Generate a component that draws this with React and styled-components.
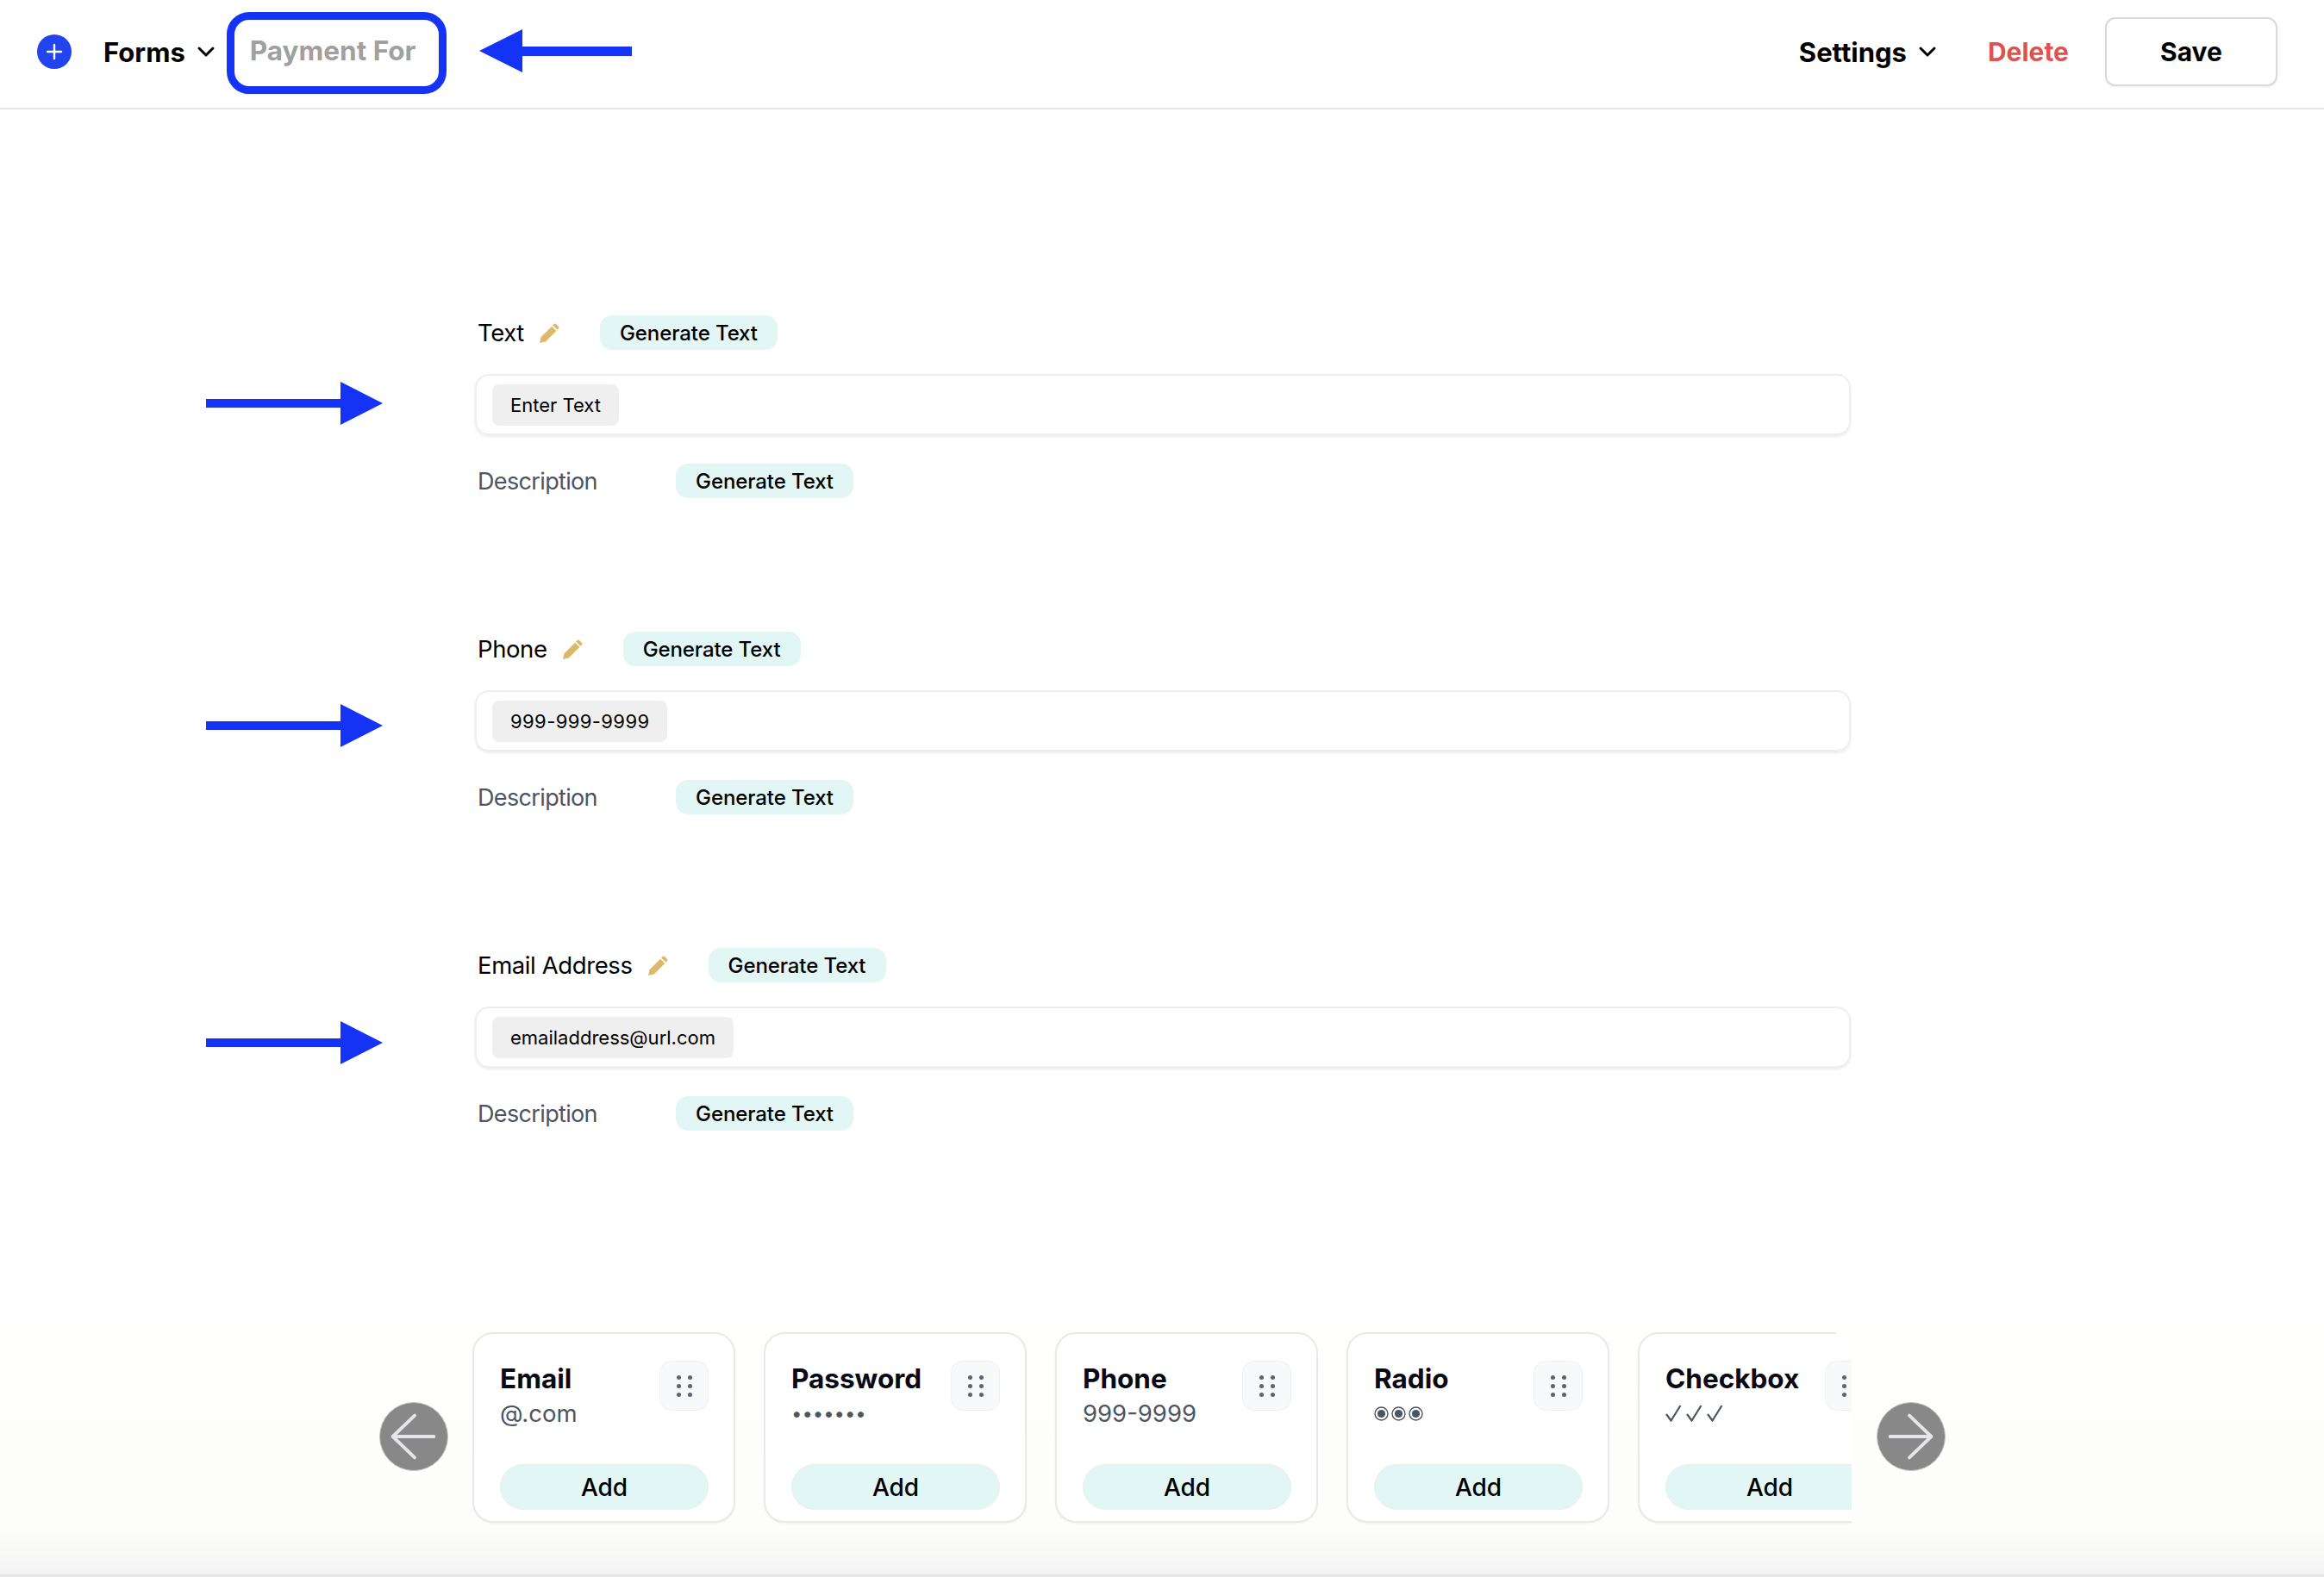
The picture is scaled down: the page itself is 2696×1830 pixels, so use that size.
import React from "react";
import styled, { createGlobalStyle } from "styled-components";
import { ChevronDown } from "lucide-react";

const GlobalStyle = createGlobalStyle`
  html, body { margin: 0; padding: 0; background: #fff; }
  body { font-family: Inter, "Noto Sans", sans-serif; color: #000; }
`;

const FIELDS = [
  { label: "Text", chip: "Enter Text", arrowNudge: -8 },
  { label: "Phone", chip: "999-999-9999", arrowNudge: 6, tracking: 0.4 },
  { label: "Email Address", chip: "emailaddress@url.com", arrowNudge: 8 },
];

const Page = styled.div`
  width: 2696px;
  height: 1830px;
  display: flex;
  flex-direction: column;
  overflow: hidden;
`;

const Header = styled.header`
  height: 127px;
  box-sizing: border-box;
  border-bottom: 2px solid #e6e6e6;
  display: flex;
  align-items: center;
  padding: 0 54px 5px 43px;
`;

const AddRound = styled.span`
  width: 40px;
  height: 40px;
  border-radius: 50%;
  background: #2244ee;
  display: flex;
  align-items: center;
  justify-content: center;
  margin-right: 37px;
`;

const MenuLabel = styled.span`
  font-size: 31px;
  font-weight: 700;
  display: flex;
  align-items: center;
  gap: 8px;
`;

const NameBox = styled.div`
  width: 255px;
  height: 95px;
  box-sizing: border-box;
  border: 9px solid #1433f5;
  border-radius: 26px;
  margin: 3px 0 0 8px;
  padding: 0 0 6px 18px;
  display: flex;
  align-items: center;
  font-size: 31.5px;
  font-weight: 700;
  color: #a0a0a0;
`;

const PointerLeft = styled.svg`
  margin: 0 0 3px 38px;
  display: block;
`;

const Spacer = styled.div`
  flex: 1;
`;

const DeleteLink = styled.span`
  font-size: 30px;
  font-weight: 700;
  color: #e0524d;
  margin-left: 54px;
`;

const SaveButton = styled.button`
  width: 200px;
  height: 80px;
  margin-left: 42px;
  border: 2px solid #dadada;
  border-radius: 12px;
  background: #fff;
  box-shadow: 0 1px 3px rgba(0, 0, 0, 0.08);
  font: 700 30px Inter, sans-serif;
  color: #000;
`;

const Fields = styled.main`
  padding: 239px 0 0 239px;
  display: flex;
  flex-direction: column;
  gap: 155px;
`;

const FieldRow = styled.section`
  display: flex;
  align-items: center;
  gap: 107px;
`;

const Pointer = styled.svg`
  flex: none;
  display: block;
  margin-top: ${(p) => p.$nudge}px;
`;

const FieldBody = styled.div`
  width: 1596px;
`;

const LabelRow = styled.div`
  height: 40px;
  padding-left: 3px;
  display: flex;
  align-items: center;
`;

const FieldLabel = styled.span`
  font-size: ${(p) => (p.$muted ? "27px" : "27.5px")};
  color: ${(p) => (p.$muted ? "#4b5563" : "#000")};
  width: ${(p) => (p.$muted ? "230px" : "auto")};
  letter-spacing: ${(p) => (p.$muted ? "-0.65px" : "-0.4px")};
`;

const Pencil = styled.svg`
  margin: 0 47px 0 18px;
  flex: none;
`;

const GeneratePill = styled.button`
  height: 40px;
  width: 206px;
  border: 0;
  border-radius: 14px;
  background: #e2f6f5;
  font: 500 24px Inter, sans-serif;
  letter-spacing: -0.1px;
  color: #000;
  padding: 0;
`;

const InputBox = styled.div`
  height: 71px;
  box-sizing: border-box;
  margin: 28px 0 33px;
  padding: 0 18px;
  border: 2px solid #eeeeee;
  border-radius: 16px;
  box-shadow: 0 2px 3px rgba(0, 0, 0, 0.08);
  display: flex;
  align-items: center;
`;

const Chip = styled.span`
  height: 48px;
  padding: 0 21px;
  border-radius: 8px;
  background: #efefef;
  font-size: 22px;
  letter-spacing: ${(p) => p.$tracking || 0}px;
  display: flex;
  align-items: center;
`;

const Footer = styled.footer`
  margin-top: auto;
  height: 310px;
  box-sizing: border-box;
  padding: 26px 0 0 440px;
  display: flex;
  align-items: flex-start;
  background: linear-gradient(#fff 0%, #fefefc 10%, #fdfdfb 83%, #f3f3f3 98.8%, #e6e6e6 99.2%);
`;

const RoundNav = styled.button`
  flex: none;
  width: 80px;
  height: 80px;
  margin-top: 81px;
  padding: 0;
  border: 1px solid #c4c4c4;
  border-radius: 50%;
  background: #888;
  display: flex;
  align-items: center;
  justify-content: center;
`;

const Viewport = styled.div`
  position: relative;
  width: 1600px;
  margin: 0 29px 0 28px;
  height: 226px;
  display: flex;
  gap: 33px;
  overflow: hidden;

  &::after {
    content: "";
    position: absolute;
    top: 0;
    right: 0;
    width: 18px;
    height: 3px;
    background: #fff;
  }
`;

const Card = styled.article`
  flex: none;
  width: 305px;
  height: 221px;
  box-sizing: border-box;
  padding: 33px 29px 13px 30px;
  background: #fff;
  border: 2px solid #e9e9e9;
  border-radius: 24px;
  box-shadow: 0 1px 2px rgba(0, 0, 0, 0.05);
  display: flex;
  flex-direction: column;
`;

const CardTop = styled.div`
  display: flex;
  justify-content: space-between;
  height: 118px;
`;

const CardTitle = styled.div`
  font-size: 31.5px;
  line-height: 38px;
  font-weight: 700;
  color: #0a0a14;
`;

const CardSample = styled.div`
  font-size: ${(p) => p.$size || 27.5}px;
  line-height: 36px;
  height: 36px;
  margin-top: 3px;
  color: #4b5563;
  display: flex;
  align-items: center;
  gap: ${(p) => p.$gap || 0}px;
`;

const DragHandle = styled.span`
  flex: none;
  width: 57px;
  height: 58px;
  margin-top: -2px;
  box-sizing: border-box;
  border: 1px solid #eef0f2;
  border-radius: 14px;
  background: #f8f9fb;
  display: grid;
  grid-template-columns: 5px 5px;
  grid-auto-rows: 5px;
  gap: 5px 8px;
  justify-content: center;
  align-content: center;
`;

const HandleDot = styled.i`
  border-radius: 50%;
  background: #5b6470;
`;

const AddButton = styled.button`
  height: 53px;
  flex: none;
  border: 1px solid #e6f1f0;
  border-radius: 27px;
  background: #e2f6f5;
  font: 500 28px Inter, sans-serif;
  color: #000;
  padding: 0;
`;

function RightPointer({ nudge }) {
  return (
    <Pointer $nudge={nudge} width="205" height="50" viewBox="0 0 205 50">
      <path d="M0 20H156V0L205 25L156 50V30H0Z" fill="#1433f5" />
    </Pointer>
  );
}

function EditPencil() {
  return (
    <Pencil width="23" height="23" viewBox="0 0 22 22">
      <path d="M0 22L1.5 15.5L13.5 3.5L18.5 8.5L6.5 20.5Z" fill="#dcb96a" />
      <path
        d="M14.5 2.5L16 1a1.5 1.5 0 0 1 2.2 0L21 3.8a1.5 1.5 0 0 1 0 2.2L19.5 7.5Z"
        fill="#dcb96a"
      />
    </Pencil>
  );
}

function RadioMark() {
  return (
    <svg width="17" height="17" viewBox="0 0 17 17">
      <circle cx="8.5" cy="8.5" r="7.5" fill="none" stroke="#4b5563" strokeWidth="1.4" />
      <circle cx="8.5" cy="8.5" r="4.6" fill="#4b5563" />
    </svg>
  );
}

function CheckMark() {
  return (
    <svg width="19" height="20" viewBox="0 0 19 20" fill="none">
      <path d="M1 11L6.5 18.5L17.5 1" stroke="#4b5563" strokeWidth="2.2" />
    </svg>
  );
}

const CARDS = [
  { title: "Email", sample: "@.com" },
  { title: "Password", sample: "•••••••", size: 22 },
  { title: "Phone", sample: "999-9999" },
  {
    title: "Radio",
    gap: 3,
    sample: [<RadioMark key="a" />, <RadioMark key="b" />, <RadioMark key="c" />],
  },
  {
    title: "Checkbox",
    gap: 5,
    sample: [<CheckMark key="a" />, <CheckMark key="b" />, <CheckMark key="c" />],
  },
];

export default function App() {
  return (
    <Page>
      <GlobalStyle />
      <Header>
        <AddRound>
          <svg width="20" height="20" viewBox="0 0 20 20">
            <path d="M10 2V18M2 10H18" stroke="#fff" strokeWidth="2.4" strokeLinecap="round" />
          </svg>
        </AddRound>
        <MenuLabel>
          Forms <ChevronDown size={32} strokeWidth={2.2} />
        </MenuLabel>
        <NameBox>Payment For</NameBox>
        <PointerLeft width="177" height="50" viewBox="0 0 177 50">
          <path d="M0 25L50 0V20H177V31H50V50Z" fill="#1433f5" />
        </PointerLeft>
        <Spacer />
        <MenuLabel>
          Settings <ChevronDown size={32} strokeWidth={2.2} />
        </MenuLabel>
        <DeleteLink>Delete</DeleteLink>
        <SaveButton>Save</SaveButton>
      </Header>
      <Fields>
        {FIELDS.map((field) => (
          <FieldRow key={field.label}>
            <RightPointer nudge={field.arrowNudge} />
            <FieldBody>
              <LabelRow>
                <FieldLabel>{field.label}</FieldLabel>
                <EditPencil />
                <GeneratePill>Generate Text</GeneratePill>
              </LabelRow>
              <InputBox>
                <Chip $tracking={field.tracking}>{field.chip}</Chip>
              </InputBox>
              <LabelRow>
                <FieldLabel $muted>Description</FieldLabel>
                <GeneratePill>Generate Text</GeneratePill>
              </LabelRow>
            </FieldBody>
          </FieldRow>
        ))}
      </Fields>
      <Footer>
        <RoundNav>
          <svg width="80" height="80" viewBox="0 0 80 80" fill="none">
            <path
              d="M64 40H15M41 15L15 40L41 65"
              stroke="#e6e6ea"
              strokeWidth="4"
              strokeLinecap="round"
              strokeLinejoin="round"
            />
          </svg>
        </RoundNav>
        <Viewport>
          {CARDS.map((card) => (
            <Card key={card.title}>
              <CardTop>
                <div>
                  <CardTitle>{card.title}</CardTitle>
                  <CardSample $size={card.size} $gap={card.gap}>
                    {card.sample}
                  </CardSample>
                </div>
                <DragHandle>
                  {[0, 1, 2, 3, 4, 5].map((dot) => (
                    <HandleDot key={dot} />
                  ))}
                </DragHandle>
              </CardTop>
              <AddButton>Add</AddButton>
            </Card>
          ))}
        </Viewport>
        <RoundNav>
          <svg width="80" height="80" viewBox="0 0 80 80" fill="none">
            <path
              d="M15 40H64M38 15L64 40L38 65"
              stroke="#e6e6ea"
              strokeWidth="4"
              strokeLinecap="round"
              strokeLinejoin="round"
            />
          </svg>
        </RoundNav>
      </Footer>
    </Page>
  );
}
